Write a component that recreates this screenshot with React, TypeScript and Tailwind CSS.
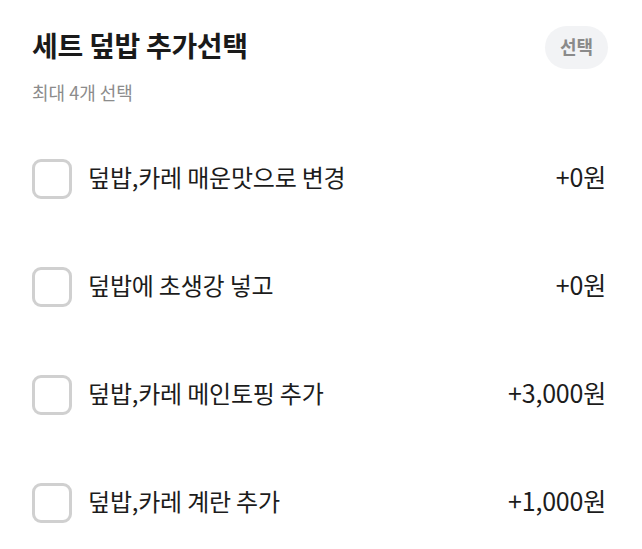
import React from 'react';

interface OptionItem {
    label: string;
    price: string;
}

const options: OptionItem[] = [
    { label: '덮밥,카레 매운맛으로 변경', price: '+0원' },
    { label: '덮밥에 초생강 넣고', price: '+0원' },
    { label: '덮밥,카레 메인토핑 추가', price: '+3,000원' },
    { label: '덮밥,카레 계란 추가', price: '+1,000원' },
];

const OptionRow: React.FC<{ item: OptionItem }> = ({ item }) => (
    <label className="flex items-center h-[108px] cursor-pointer">
        <span className="w-10 h-10 shrink-0 rounded-[9px] border-[3px] border-[#d0d0d0] bg-white" />
        <span className="ml-4 flex-1 pb-1 text-[24px] text-[#1c1c1c] tracking-[-0.2px]">{item.label}</span>
        <span className="pb-1 text-[25px] text-[#1c1c1c] tracking-[-0.2px]">{item.price}</span>
    </label>
);

export default function App() {
    return (
        <div
            className="w-[642px] h-[549px] bg-white pl-8 pr-9 overflow-hidden"
            style={{ fontFamily: '"Noto Sans CJK KR", "Noto Sans", sans-serif' }}
        >
            <div className="flex items-center justify-between pt-[26px]">
                <h1 className="pb-1 text-[28px] font-bold text-[#1a1a1a] tracking-[-0.3px] leading-[39px]">세트 덮밥 추가선택</h1>
                <span className="h-[43px] w-[63px] -mr-[2px] pb-[2px] flex items-center justify-center rounded-full bg-[#f2f3f5] text-[18px] font-bold text-[#8a8a8a]">
                    선택
                </span>
            </div>
            <p className="mt-[11px] text-[18px] leading-6 text-[#8c8c8c]">최대 4개 선택</p>
            <div className="mt-[21px] flex flex-col">
                {options.map((item, i) => (
                    <OptionRow key={i} item={item} />
                ))}
            </div>
        </div>
    );
}
